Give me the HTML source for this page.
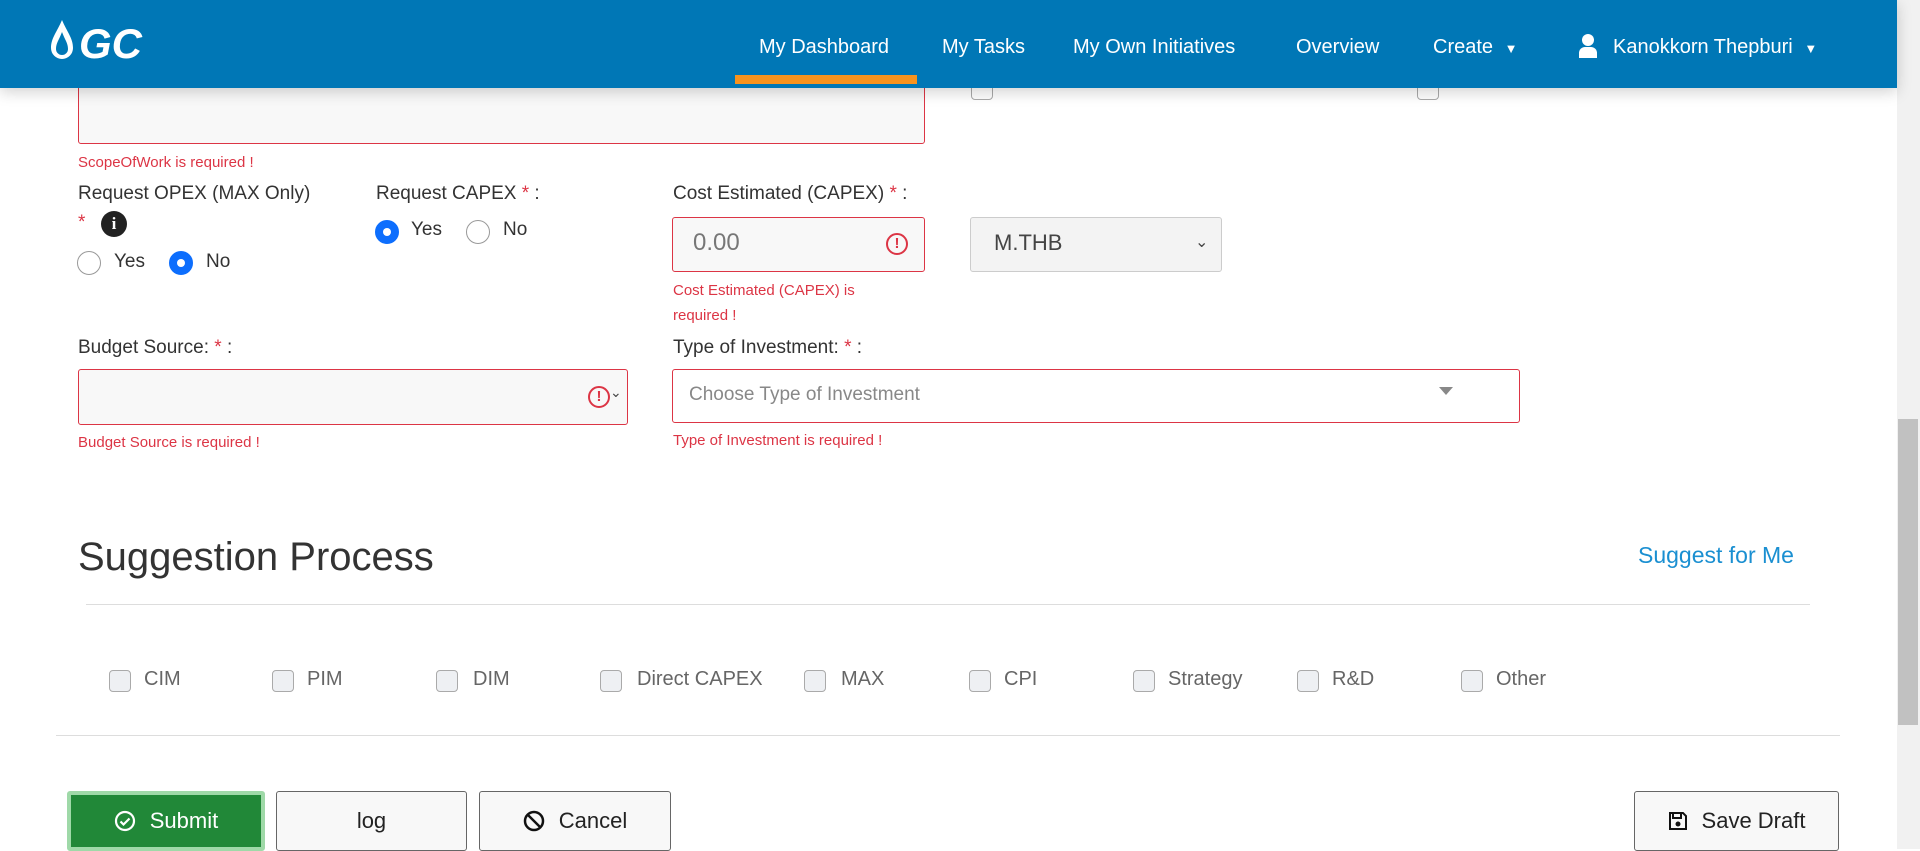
<!DOCTYPE html>
<html><head><meta charset="utf-8"><style>
*{box-sizing:border-box;margin:0;padding:0}
body{width:1920px;height:849px;overflow:hidden;background:#fff;font-family:"Liberation Sans",sans-serif;color:#333;position:relative}
.a{position:absolute;white-space:nowrap}
.nav{position:absolute;left:0;top:0;width:1897px;height:88px;background:#0077b6;box-shadow:0 4px 14px rgba(0,0,0,.18);z-index:5}
.nav .a{color:#fff;font-size:20px;top:36px}
.lbl{font-size:19px;color:#333}
.req{color:#dc3545}
.err{font-size:15px;color:#dc3545}
.radio{position:absolute;width:24px;height:24px;border-radius:50%;border:1px solid #999;background:#fff}
.radio.on{background:#0d6efd;border-color:#0d6efd}
.radio.on:after{content:"";position:absolute;left:7px;top:7px;width:8px;height:8px;border-radius:50%;background:#fff}
.cb{position:absolute;width:22px;height:22px;border:1px solid #aaa;border-radius:4px;background:#eef0f3}
.cbt{font-size:20px;color:#666}
.box{position:absolute;border:1px solid #dc3545;border-radius:3px;background:#f8f8f8}
.btn{position:absolute;top:791px;height:60px;border:1px solid #666;border-radius:3px;background:#f8f8f8;font-size:22px;display:flex;align-items:center;justify-content:center;gap:14px;color:#222}
.ei{position:absolute;width:22px;height:22px;border:2px solid #dc3545;border-radius:50%;color:#dc3545;font-size:15px;font-weight:bold;text-align:center;line-height:18px}
</style></head><body>
<div class="nav">
 <svg class="a" style="left:49px;top:18px" width="130" height="44" viewBox="0 0 130 44">
  <path d="M13 2 C8 14 2 20 2 30 a11 11 0 0 0 22 0 C24 20 18 14 13 2Z" fill="#fff"/>
  <path d="M13 14 C10 22 7 25 7 31 a6 6 0 0 0 12 0 C19 25 16 22 13 14Z" fill="#0077b6"/>
  <text x="30" y="40" font-family="Liberation Sans" font-weight="bold" font-style="italic" font-size="42" fill="#fff">GC</text>
 </svg>
 <div class="a" style="left:759px">My Dashboard</div>
 <div class="a" style="left:735px;top:75px;width:182px;height:9px;background:#f7931e"></div>
 <div class="a" style="left:942px">My Tasks</div>
 <div class="a" style="left:1073px">My Own Initiatives</div>
 <div class="a" style="left:1296px">Overview</div>
 <div class="a" style="left:1433px">Create <span style="font-size:13px;margin-left:6px">▼</span></div>
 <svg class="a" style="left:1578px;top:34px" width="20" height="24" viewBox="0 0 20 24"><circle cx="10" cy="6" r="6" fill="#fff"/><path d="M1 24 v-5 a6 6 0 0 1 6-6 h6 a6 6 0 0 1 6 6 v5z" fill="#fff"/></svg>
 <div class="a" style="left:1613px">Kanokkorn Thepburi <span style="font-size:13px;margin-left:6px">▼</span></div>
</div>
<div class="a" style="left:1897px;top:0;width:23px;height:849px;background:#f1f1f1"></div>
<div class="a" style="left:1898px;top:419px;width:20px;height:306px;background:#c1c1c1"></div>

<div class="cb" style="left:971px;top:78px;background:#fff"></div>
<div class="cb" style="left:1417px;top:78px;background:#fff"></div>

<div class="box" style="left:78px;top:70px;width:847px;height:74px"></div>
<div class="a err" style="left:78px;top:154px">ScopeOfWork is required !</div>

<div class="a lbl" style="left:78px;top:183px">Request OPEX (MAX Only)</div>
<div class="a req" style="left:78px;top:212px;font-size:19px">*</div>
<div class="a" style="left:101px;top:211px;width:26px;height:26px;border-radius:50%;background:#222;color:#fff;font-weight:bold;font-size:17px;text-align:center;line-height:26px;font-family:'Liberation Serif',serif">i</div>
<div class="radio" style="left:77px;top:251px"></div><div class="a lbl" style="left:114px;top:251px">Yes</div>
<div class="radio on" style="left:169px;top:251px"></div><div class="a lbl" style="left:206px;top:251px">No</div>

<div class="a lbl" style="left:376px;top:183px">Request CAPEX <span class="req">*</span> :</div>
<div class="radio on" style="left:375px;top:220px"></div><div class="a lbl" style="left:411px;top:219px">Yes</div>
<div class="radio" style="left:466px;top:220px"></div><div class="a lbl" style="left:503px;top:219px">No</div>

<div class="a lbl" style="left:673px;top:183px">Cost Estimated (CAPEX) <span class="req">*</span> :</div>
<div class="box" style="left:672px;top:217px;width:253px;height:55px"></div>
<div class="a" style="left:693px;top:229px;font-size:24px;color:#777">0.00</div>
<div class="ei" style="left:886px;top:233px">!</div>
<div class="a" style="left:970px;top:217px;width:252px;height:55px;border:1px solid #ccc;border-radius:3px;background:#f3f3f3"></div>
<div class="a" style="left:994px;top:230px;font-size:22px;color:#444">M.THB</div>
<div class="a" style="left:1195px;top:232px;font-size:16px;color:#444">&#8964;</div>
<div class="a err" style="left:673px;top:282px">Cost Estimated (CAPEX) is</div>
<div class="a err" style="left:673px;top:307px">required !</div>

<div class="a lbl" style="left:78px;top:337px">Budget Source: <span class="req">*</span> :</div>
<div class="box" style="left:78px;top:369px;width:550px;height:56px"></div>
<div class="ei" style="left:588px;top:386px">!</div>
<div class="a" style="left:610px;top:384px;font-size:14px;color:#444">&#8964;</div>
<div class="a err" style="left:78px;top:434px">Budget Source is required !</div>

<div class="a lbl" style="left:673px;top:337px">Type of Investment: <span class="req">*</span> :</div>
<div class="box" style="left:672px;top:369px;width:848px;height:54px;background:#fff"></div>
<div class="a" style="left:689px;top:384px;font-size:19px;color:#888">Choose Type of Investment</div>
<div class="a" style="left:1439px;top:387px;width:0;height:0;border-left:7px solid transparent;border-right:7px solid transparent;border-top:8px solid #888"></div>
<div class="a err" style="left:673px;top:432px">Type of Investment is required !</div>

<div class="a" style="left:78px;top:535px;font-size:40px;color:#333">Suggestion Process</div>
<div class="a" style="left:1638px;top:542px;font-size:23px;color:#1a8fd1">Suggest for Me</div>
<div class="a" style="left:86px;top:604px;width:1724px;height:1px;background:#ddd"></div>

<div class="cb" style="left:109px;top:670px"></div><div class="a cbt" style="left:144px;top:668px">CIM</div>
<div class="cb" style="left:272px;top:670px"></div><div class="a cbt" style="left:307px;top:668px">PIM</div>
<div class="cb" style="left:436px;top:670px"></div><div class="a cbt" style="left:473px;top:668px">DIM</div>
<div class="cb" style="left:600px;top:670px"></div><div class="a cbt" style="left:637px;top:668px">Direct CAPEX</div>
<div class="cb" style="left:804px;top:670px"></div><div class="a cbt" style="left:841px;top:668px">MAX</div>
<div class="cb" style="left:969px;top:670px"></div><div class="a cbt" style="left:1004px;top:668px">CPI</div>
<div class="cb" style="left:1133px;top:670px"></div><div class="a cbt" style="left:1168px;top:668px">Strategy</div>
<div class="cb" style="left:1297px;top:670px"></div><div class="a cbt" style="left:1332px;top:668px">R&amp;D</div>
<div class="cb" style="left:1461px;top:670px"></div><div class="a cbt" style="left:1496px;top:668px">Other</div>
<div class="a" style="left:56px;top:735px;width:1784px;height:1px;background:#ddd"></div>

<div class="btn" style="left:67px;width:198px;background:#218838;border:4px solid #9fd9a8;color:#fff">
 <svg width="22" height="22" viewBox="0 0 22 22"><circle cx="11" cy="11" r="9" fill="none" stroke="#fff" stroke-width="2.2"/><path d="M6.5 11.5l3 3 6-6" fill="none" stroke="#fff" stroke-width="2.2"/></svg>Submit</div>
<div class="btn" style="left:276px;width:191px">log</div>
<div class="btn" style="left:479px;width:192px">
 <svg width="22" height="22" viewBox="0 0 22 22"><circle cx="11" cy="11" r="9" fill="none" stroke="#111" stroke-width="2.5"/><path d="M4.5 4.5l13 13" stroke="#111" stroke-width="2.5"/></svg>Cancel</div>
<div class="btn" style="left:1634px;width:205px">
 <svg width="20" height="20" viewBox="0 0 20 20"><path d="M2 2h13l3 3v13H2z" fill="none" stroke="#111" stroke-width="2"/><rect x="5" y="2" width="8" height="5" fill="none" stroke="#111" stroke-width="2"/><circle cx="10" cy="13" r="2.5" fill="#111"/></svg>Save Draft</div>
</body></html>
